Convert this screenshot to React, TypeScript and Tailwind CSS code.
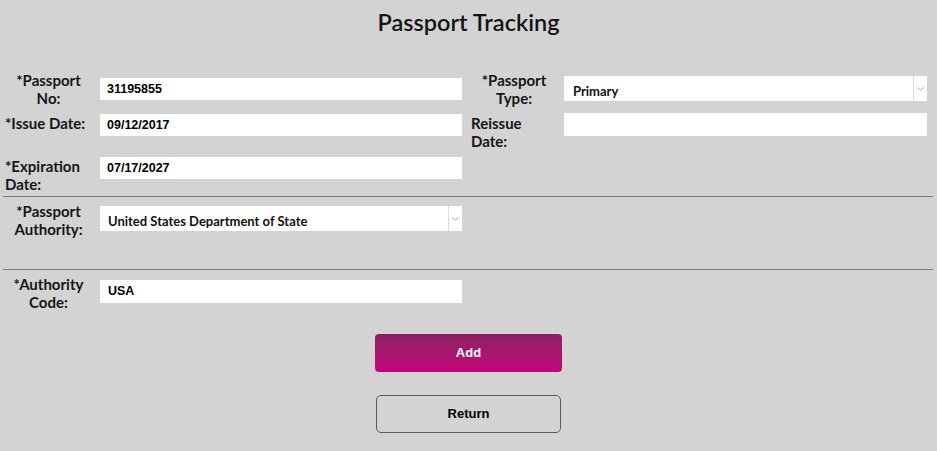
import React from "react";

const label = "font-['Lato',sans-serif] text-[15px] font-bold leading-[18px] text-[#161616]";
const field = "bg-white font-['Liberation_Sans',Arial,sans-serif] text-[12.5px] font-bold text-black flex items-center";

function TextField({ value, className }: { value: string; className: string }) {
  return <div className={`${field} pl-[7px] ${className}`}>{value}</div>;
}

function SelectField({ value, className, pad = "pl-[9px]" }: { value: string; className: string; pad?: string }) {
  return (
    <div className={`flex bg-white ${className}`}>
      <div className={`flex flex-1 items-center pt-[6px] ${pad} font-['Lato',sans-serif] text-[13px] font-bold text-[#111]`}>{value}</div>
      <div className="flex w-[14px] items-center justify-center border-l border-[#dcdcdc]">
        <svg width="7" height="4" viewBox="0 0 7 4" fill="none">
          <path d="M0.5 0.5 L3.5 3 L6.5 0.5" stroke="#a0a0a0" strokeWidth="1" />
        </svg>
      </div>
    </div>
  );
}

export default function App() {
  return (
    <div className="min-h-[451px] w-[937px] bg-[#d3d3d3] pb-[18px]">
      <h1 className="pt-[9px] text-center font-['Lato',sans-serif] text-[23.5px] font-semibold leading-[26px] text-[#141414]">
        Passport Tracking
      </h1>

      <div className="mt-[36px] flex h-[39px] items-start">
        <div className={`${label} ml-[5px] w-[87px] text-center`}>*Passport<br />No:</div>
        <TextField value="31195855" className="ml-[8px] mt-[7px] h-[22px] w-[362px]" />
        <div className={`${label} ml-[9px] w-[86px] text-center`}>*Passport<br />Type:</div>
        <SelectField value="Primary" className="ml-[7px] mt-[5px] h-[25px] w-[363px]" />
      </div>

      <div className="flex h-[47px] items-start">
        <div className={`${label} ml-[5px] mt-[4px] w-[87px] whitespace-nowrap text-left`}>*Issue Date:</div>
        <TextField value="09/12/2017" className="ml-[8px] mt-[4px] h-[22px] w-[362px]" />
        <div className={`${label} ml-[9px] mt-[4px] w-[86px] text-left`}>Reissue<br />Date:</div>
        <div className="ml-[7px] mt-[3px] h-[23px] w-[363px] bg-white" />
      </div>

      <div className="flex h-[36px] items-start">
        <div className={`${label} ml-[5px] w-[87px] text-left`}>*Expiration<br />Date:</div>
        <TextField value="07/17/2027" className="ml-[8px] h-[22px] w-[362px]" />
      </div>

      <div className="mx-[3px] mt-[3px] h-px w-[930px] bg-[#7c7c7c]" />

      <div className="flex h-[72px] items-start">
        <div className={`${label} ml-[5px] mt-[5px] w-[87px] text-center`}>*Passport<br />Authority:</div>
        <SelectField value="United States Department of State" pad="pl-[8px]" className="ml-[8px] mt-[9px] h-[25px] w-[362px]" />
      </div>

      <div className="mx-[3px] h-px w-[930px] bg-[#7c7c7c]" />

      <div className="flex h-[41px] items-start">
        <div className={`${label} ml-[5px] mt-[5px] w-[87px] text-center`}>*Authority<br />Code:</div>
        <TextField value="USA" className="ml-[8px] mt-[10px] h-[23px] w-[362px] pl-[8px]" />
      </div>

      <div className="mt-[23px] flex flex-col items-center gap-[23px]">
        <button className="h-[38px] w-[187px] rounded-[4px] bg-gradient-to-b from-[#8a1f5f] to-[#c6007d] font-['Liberation_Sans',Arial,sans-serif] text-[13px] font-bold text-white">
          Add
        </button>
        <button className="h-[38px] w-[185px] rounded-[5px] border border-[#5a5a5a] font-['Liberation_Sans',Arial,sans-serif] text-[13px] font-bold text-black">
          Return
        </button>
      </div>
    </div>
  );
}
